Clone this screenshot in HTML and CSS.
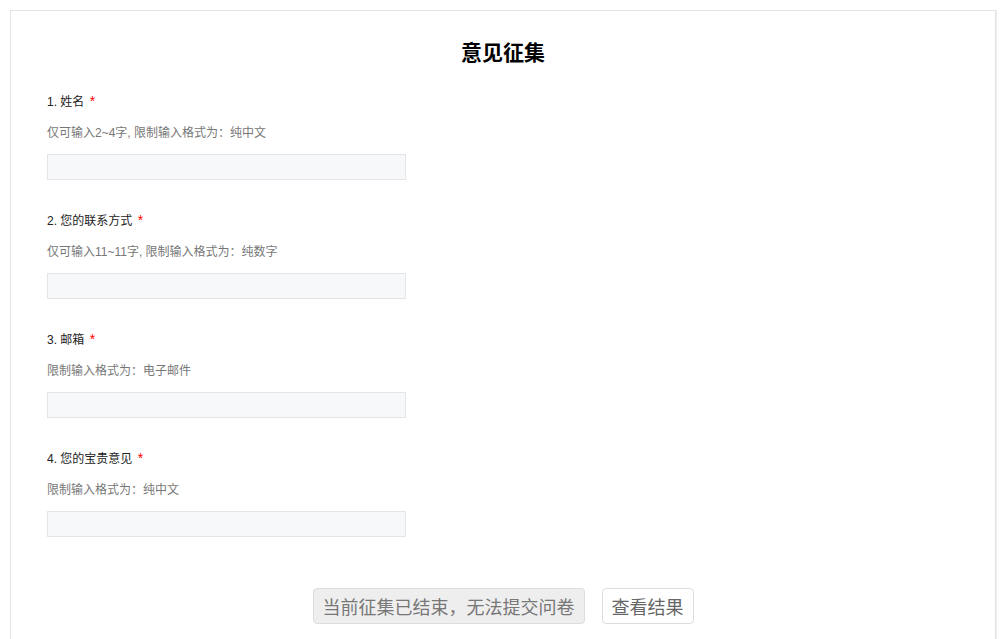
FILE: index.html
```html
<!DOCTYPE html>
<html lang="zh-CN">
<head>
  <meta charset="UTF-8">
  <meta name="viewport" content="width=device-width, initial-scale=1.0">
  <title>意见征集</title>
  <link rel="stylesheet" href="styles.css">
</head>
<body>
  <div class="survey">
    <div class="survey-title">意见征集</div>

    <div class="question">
      <div class="question-label">1. 姓名 <span class="required">*</span></div>
      <div class="question-hint">仅可输入2~4字, 限制输入格式为：纯中文</div>
      <input class="question-input" type="text">
    </div>

    <div class="question">
      <div class="question-label">2. 您的联系方式 <span class="required">*</span></div>
      <div class="question-hint">仅可输入11~11字, 限制输入格式为：纯数字</div>
      <input class="question-input" type="text">
    </div>

    <div class="question">
      <div class="question-label">3. 邮箱 <span class="required">*</span></div>
      <div class="question-hint">限制输入格式为：电子邮件</div>
      <input class="question-input" type="text">
    </div>

    <div class="question">
      <div class="question-label">4. 您的宝贵意见 <span class="required">*</span></div>
      <div class="question-hint">限制输入格式为：纯中文</div>
      <input class="question-input" type="text">
    </div>

    <div class="actions">
      <button class="btn btn-disabled" disabled>当前征集已结束，无法提交问卷</button>
      <button class="btn">查看结果</button>
    </div>
  </div>
</body>
</html>
```

FILE: styles.css
```css
body {
  margin: 0;
  font-family: "Liberation Sans", "Noto Sans CJK SC", sans-serif;
  background: #fff;
  color: #333;
}
.survey {
  margin: 10px 4px 0 10px;
  padding: 27px 36px 40px;
  border: 1px solid #e3e3e3;
  box-shadow: 1px 0 0 #eee;
  min-height: 700px;
}
.survey-title {
  text-align: center;
  font-size: 21px;
  font-weight: bold;
  line-height: 30px;
  color: #000;
  margin-bottom: 25px;
}
.question {
  margin-bottom: 32px;
}
.question-label {
  height: 18px;
  font-size: 12px;
  line-height: 18px;
  color: #222;
  margin-bottom: 13px;
}
.required {
  color: #f00;
  font-size: 14px;
  line-height: 1;
  margin-left: 2px;
}
.question-hint {
  font-size: 12px;
  line-height: 18px;
  color: #777;
  margin-bottom: 12px;
}
.question-input {
  display: block;
  box-sizing: border-box;
  width: 359px;
  height: 26px;
  margin: 0;
  border: 1px solid #e3e5e8;
  background: #f7f8fa;
  outline: none;
}
.actions {
  display: flex;
  justify-content: center;
  gap: 17px;
  margin-top: 51px;
}
.btn {
  font-family: "Noto Sans CJK SC", sans-serif;
  font-size: 18px;
  line-height: 34px;
  height: 36px;
  padding: 0 9px;
  border: 1px solid #ddd;
  border-radius: 4px;
  background: #fff;
  color: #666;
}
.btn-disabled {
  background: #eee;
  color: #777;
}
```
